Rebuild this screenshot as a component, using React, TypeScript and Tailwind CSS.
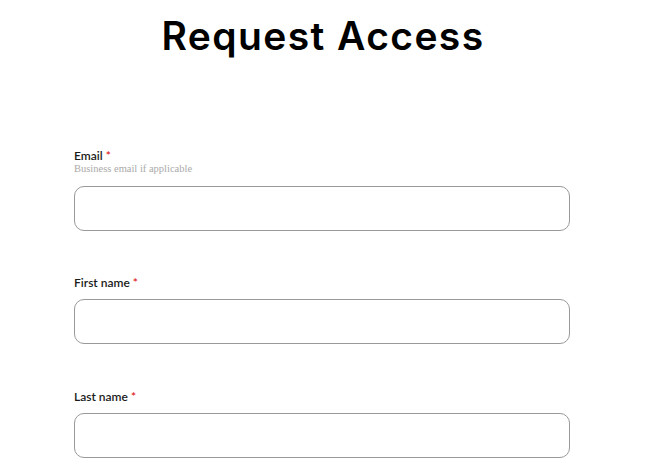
export default function App() {
  const fields = [
    { label: "First name", gap: "mt-[44px]" },
    { label: "Last name", gap: "mt-[45px]" },
  ];

  return (
    <div className="min-h-screen bg-white font-['Lato',sans-serif] text-black">
      <h1 className="pt-[12px] pr-[4px] text-center font-['Inter',sans-serif] text-[39px] font-semibold leading-[48px] tracking-[1.4px] text-black">
        Request Access
      </h1>

      <form className="ml-[74px] mt-[88px] w-[496px]">
        {/* Email */}
        <div>
          <label className="block text-[12px] font-semibold leading-[16px] text-[#1a1a1a]">
            Email <span className="text-[#e0201c]">*</span>
          </label>
          <p className="-mt-[2px] font-['Liberation_Serif',serif] text-[10.5px] leading-[14px] text-[#aaa]">
            Business email if applicable
          </p>
          <input
            type="email"
            className="mt-[10px] block h-[45px] w-full rounded-[10px] border border-[#999] bg-white px-3 outline-none"
          />
        </div>

        {fields.map((f) => (
          <div key={f.label} className={f.gap}>
            <label className="block text-[12px] font-semibold leading-[16px] text-[#1a1a1a]">
              {f.label} <span className="text-[#e0201c]">*</span>
            </label>
            <input
              type="text"
              className="mt-[8px] block h-[45px] w-full rounded-[10px] border border-[#999] bg-white px-3 outline-none"
            />
          </div>
        ))}
      </form>
    </div>
  );
}
